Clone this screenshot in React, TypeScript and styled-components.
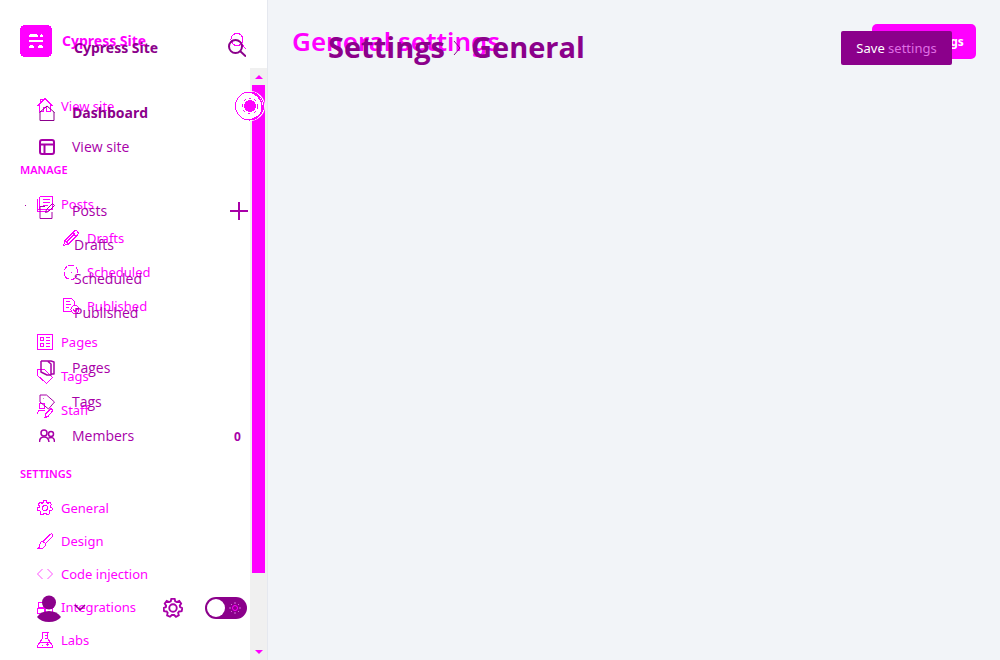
import React from "react";
import styled, { createGlobalStyle, css } from "styled-components";

const bright = "#ff00ff";
const deep = "#8b008b";
const mid = "#a800a8";
const wide = `"Noto Sans", "Open Sans", sans-serif`;

const GlobalStyle = createGlobalStyle`
  * { box-sizing: border-box; }
  body { margin: 0; background: #f2f4f8; font-family: "Open Sans", "Noto Sans", sans-serif; font-size: 14px; }
  button { font: inherit; cursor: pointer; }
  a { color: inherit; text-decoration: none; }
  ul { list-style: none; margin: 0; padding: 0; }
`;

const Shell = styled.div`
  display: grid;
  grid-template-columns: 268px minmax(0, 1fr);
  height: 100vh;
  overflow: hidden;
`;

const Stack = styled.div`
  display: grid;
  grid-template: minmax(0, 1fr) / minmax(0, 1fr);
  min-height: 0;
  > * { grid-area: 1 / 1; min-width: 0; }
`;

const Sidebar = styled(Stack).attrs({ as: "aside" })`
  background: #fff;
  border-right: 1px solid #e5e8ef;
`;

const Layer = styled.div<{ $tone: string }>`
  display: flex;
  flex-direction: column;
  color: ${(p) => p.$tone};
  overflow: hidden;
`;

const BackLayer = styled(Layer)`
  font-family: ${wide};
`;

const FrontLayer = styled(Layer)`
  z-index: 2;
`;

const SiteHeader = styled.header<{ $front?: boolean }>`
  display: flex;
  align-items: center;
  flex: none;
  gap: 10px;
  height: ${(p) => (p.$front ? 96 : 82)}px;
  padding: 0 21px 0 ${(p) => (p.$front ? 74 : 20)}px;
`;

const SiteName = styled.strong`
  flex: 1;
  font-family: ${wide};
  font-size: 14px;
  font-weight: 700;
  line-height: 20px;
  white-space: nowrap;
`;

const IconButton = styled.button`
  display: flex;
  flex: none;
  padding: 0;
  border: 0;
  background: none;
  color: inherit;
`;

const Group = styled.ul<{ $top?: number; $bottom?: number }>`
  flex: none;
  margin-top: ${(p) => p.$top ?? 0}px;
  margin-bottom: ${(p) => p.$bottom ?? 0}px;
`;

const Item = styled.li<{
  $front?: boolean;
  $nested?: boolean;
  $bold?: boolean;
  $tight?: boolean;
  $marked?: boolean;
  $tone?: string;
}>`
  display: flex;
  align-items: center;
  justify-content: space-between;
  height: ${(p) => (p.$tight ? 33 : 34)}px;
  padding-right: 19px;
  ${(p) =>
    p.$front
      ? css`padding-left: ${p.$nested ? 74 : 39}px;`
      : css`padding-left: ${p.$nested ? 63 : 37}px;`}
  ${(p) =>
    p.$marked &&
    css`background: linear-gradient(${mid}, ${mid}) 25px 11px / 1px 1px no-repeat;`}
  color: ${(p) => p.$tone ?? "inherit"};
  font-weight: ${(p) => (p.$bold ? 700 : 400)};
`;

const ItemLink = styled.a<{ $front?: boolean }>`
  display: flex;
  align-items: center;
  gap: ${(p) => (p.$front ? 17 : 8)}px;
  font-size: ${(p) => (p.$front ? 14 : 13)}px;
  line-height: 20px;
  white-space: nowrap;
`;

const GroupTitle = styled.h2`
  flex: none;
  margin: 30px 0 0;
  padding-left: 20px;
  font-size: 11px;
  font-weight: 600;
  line-height: 34px;
`;

const Count = styled.span`
  width: 14px;
  font-size: 12px;
  font-weight: 700;
`;

const Footer = styled.footer`
  display: flex;
  align-items: center;
  flex: none;
  height: 28px;
  margin-top: auto;
  margin-bottom: 38px;
  padding: 0 20px 0 37px;
`;

const AccountButton = styled(IconButton)`
  align-items: center;
  gap: 13px;
  margin-right: auto;
  padding-top: 2px;
`;

const ToggleLabel = styled.label`
  display: flex;
  align-items: center;
  justify-content: space-between;
  width: 42px;
  height: 22px;
  margin-left: 22px;
  padding: 0 6px 0 2px;
  border-radius: 11px;
  background: ${deep};
`;

const Toggle = styled.input`
  appearance: none;
  width: 18px;
  height: 18px;
  margin: 0;
  border-radius: 50%;
  background: #fff;
`;

const ScrollTrack = styled.div`
  display: flex;
  flex-direction: column;
  align-items: center;
  justify-self: end;
  z-index: 1;
  width: 17px;
  margin-top: 68px;
  background: #f0f0f0;
  color: ${bright};
`;

const ScrollArrow = styled.div`
  display: flex;
  align-items: center;
  justify-content: center;
  height: 17px;
`;

const ScrollRail = styled.div`
  display: flex;
  flex: 1;
  min-height: 0;
`;

const ScrollThumb = styled.div`
  width: 13px;
  height: 87.5%;
  background: ${bright};
`;

const Launcher = styled.button`
  z-index: 3;
  display: flex;
  justify-self: end;
  align-self: start;
  margin: 91px 2px 0 0;
  padding: 0;
  border: 0;
  background: none;
`;

const Main = styled(Stack).attrs({ as: "main" })`
  background: #f2f4f8;
`;

const Toolbar = styled.div<{ $front?: boolean }>`
  display: flex;
  align-items: center;
  justify-content: space-between;
  align-self: start;
  z-index: ${(p) => (p.$front ? 2 : 1)};
  height: ${(p) => (p.$front ? 96 : 83)}px;
  padding: ${(p) => (p.$front ? "0 48px 0 60px" : "0 24px")};
  color: ${(p) => (p.$front ? deep : bright)};
`;

const Title = styled.h1<{ $front?: boolean }>`
  display: flex;
  align-items: center;
  margin: 0;
  padding-bottom: 2px;
  font-family: ${(p) => (p.$front ? "inherit" : wide)};
  font-size: ${(p) => (p.$front ? 29 : 26)}px;
  font-weight: ${(p) => (p.$front ? 700 : 600)};
  line-height: 36px;
  white-space: nowrap;
`;

const SaveButton = styled.button<{ $front?: boolean }>`
  width: ${(p) => (p.$front ? 111 : 104)}px;
  height: ${(p) => (p.$front ? 34 : 35)}px;
  padding: 0;
  border: 0;
  border-radius: ${(p) => (p.$front ? 2 : 5)}px;
  background: ${(p) => (p.$front ? deep : bright)};
  color: #fff;
  font-family: ${wide};
  font-size: ${(p) => (p.$front ? 13 : 12)}px;
  font-weight: ${(p) => (p.$front ? 400 : 700)};
  white-space: nowrap;
`;

const Tint = styled.span`
  color: #df6fe4;
`;

type IconProps = { size?: number; children: React.ReactNode; width?: number; crisp?: boolean };

const Icon = ({ size = 16, children, width = 1, crisp }: IconProps) => (
  <svg
    width={size}
    height={size}
    viewBox={`0 0 ${size} ${size}`}
    fill="none"
    stroke="currentColor"
    strokeWidth={width}
    strokeLinejoin="round"
    shapeRendering={crisp ? "crispEdges" : "auto"}
    aria-hidden="true"
  >
    {children}
  </svg>
);

const gear8 =
  "M6.7.6h2.6l.5 2 1.2.6 2-.8 1.5 2-1.1 1.8.3 1.1 1.8.8-.6 2.5-2 .2-.8 1 .5 2-2.2 1.2-1.5-1.4H7.1L5.6 15l-2.3-1.1.4-2.1-.8-1-2-.2L.4 8.1l1.9-.8.2-1.1-1.1-1.8 1.6-2 2 .8 1.2-.6z";

const icons = {
  home: <Icon crisp><path d="M.5 8 8 .5 15.500 8M2.500 6.500v7h4v-4h3v4h4v-7M3.500 4.500v-3h2" /></Icon>,
  posts: <Icon crisp><path d="M2.500.5h13v13h-3l-2 2h-10v-13M2.500.5v13M5.500 3.500h7M5.500 6.500h7M5.500 9.500h5M.5 13.500h12" /></Icon>,
  pencil: <Icon crisp><path d="m.5 15.500 1.500-5L11 1.500q2-2 3.500 0t0 3.500L5.500 14zM2 10.500 5.500 14M9.500 3l3.500 3.500M4 11.500l8-8" /></Icon>,
  clock: <Icon crisp><path d="M5 1.500h6M13 3.500q2 2 1.500 6M14 12q-2 3.500-6 3.500M6 15q-5-1-5-7M1.500 6 4 2M8 7.500v1" /></Icon>,
  published: <Icon crisp><path d="M7.500 13.500h-7V.5h8l3 3v3M3 3.500h4M3 6.500h5M3 9.500h3" /><circle cx="12" cy="11.500" r="4" /><path d="m10 11.500 2 2 3-3" /></Icon>,
  pages: <Icon crisp><path d="M.5.5h15v15H.5zM3.500 3.500h3v3h-3zM3.500 9.500h3v3h-3zM9 3.500h4M9 6.500h4M9 9.500h4M9 12.500h4" /></Icon>,
  tag: <Icon crisp><path d="M.5 1.500h7l8 8-6 6-9-8zM3.500 4.500h1" /></Icon>,
  staff: <Icon crisp><circle cx="5" cy="4" r="3" /><path d="M.5 12q0-4 4.500-4l3 1M8 15.500l1-4 5-5 2 2-5 6z" /></Icon>,
  gear: <Icon crisp><path d={gear8} /><circle cx="8" cy="8" r="2.500" /></Icon>,
  brush: <Icon crisp><path d="m6 8.500 7-7q2-1.500 2.500 0t-1 3l-6 6zM6 8.500q-3 0-3 3t-2.500 4h4q4-1 4-5" /></Icon>,
  code: <Icon crisp><path d="M5.500 3 .5 8l5 5M10.500 3l5 5-5 5" strokeWidth="0.700" /></Icon>,
  blocks: <Icon crisp><circle cx="4" cy="6" r="3" /><path d="M.5 9.500h7v5h-7zM8.500 9.500h7v5h-7zM10.500 4.500h4v5" /></Icon>,
  flask: <Icon crisp><path d="M4.500.5h7M5.500.5v6l-5 7v2h15v-2l-5-7v-6M3 10.500h10M5.500 12.500v1M9 12.500h3M10.500 11v3M7.500 3.500h3M7.500 6.500h3" /></Icon>,
  house: <Icon><path d="M1 7v8.500h14V7M.5 7.500 8 1l7.500 6.500" /></Icon>,
  layout: <Icon width={2}><rect x="1" y="1" width="14" height="14" rx="2" /><path d="M1 5.500h14M5.500 5.500V15" /></Icon>,
  compose: <Icon><path d="M6 3.500H1v12h12V9M6.500 9.500l1-3 6-6 2 2-6 6z" /></Icon>,
  book: <Icon><path d="M2 1h10l3 1v12h-3M2 1v11l6 3h4V4L9 1.500" strokeWidth="1.500" /></Icon>,
  label: <Icon><path d="M1 1h6.500l8 7-6 7L1 8z" /><path d="M4 4.500h.5" /></Icon>,
  members: <Icon width={1.5}><circle cx="5" cy="5" r="3" /><circle cx="12" cy="6" r="2.500" /><path d="M.5 14q0-5 4.500-5t5 5M9.500 10q6-2 6 4" /></Icon>,
};

type Entry = {
  icon?: keyof typeof icons;
  text: string;
  bold?: boolean;
  tone?: string;
  marked?: boolean;
  extra?: React.ReactNode;
};
type MenuProps = {
  entries: Entry[];
  front?: boolean;
  nested?: boolean;
  tight?: boolean;
  top?: number;
  bottom?: number;
};

const Menu = ({ entries, front, nested, tight, top, bottom }: MenuProps) => (
  <Group $top={top} $bottom={bottom}>
    {entries.map((e) => (
      <Item
        key={e.text}
        $front={front}
        $nested={nested}
        $tight={tight}
        $bold={e.bold}
        $marked={e.marked}
        $tone={e.tone}
      >
        <ItemLink href="#" $front={front}>
          {e.icon && icons[e.icon]}
          {e.text}
        </ItemLink>
        {e.extra}
      </Item>
    ))}
  </Group>
);

const Logo = () => (
  <svg width="32" height="32" viewBox="0 0 32 32" shapeRendering="crispEdges" aria-hidden="true">
    <rect width="32" height="32" rx="5" fill={bright} />
    <path d="M10 9h7v1h-7zM9 10h9v2H9zM20 10h3v2h-3zM21 9h1v1h-1zM9 15h14v2H9zM10 20h3v1h-3zM9 21h5v2H9zM18 21h5v2h-5zM19 20h3v1h-3z" fill="#fff" />
  </svg>
);

const Triangle = ({ down }: { down?: boolean }) => (
  <svg width="8" height="4" viewBox="0 0 8 4" fill="currentColor" aria-hidden="true">
    <path d={down ? "M0 0h8L4 4z" : "M0 4h8L4 0z"} />
  </svg>
);

const AddPost = () => (
  <IconButton aria-label="New post">
    <Icon size={18} width={2}><path d="M9 0v18M0 9h18" /></Icon>
  </IconButton>
);

export default function App() {
  return (
    <>
      <GlobalStyle />
      <Shell>
        <Sidebar>
          <BackLayer $tone={bright}>
            <SiteHeader>
              <Logo />
              <SiteName>Cypress Site</SiteName>
              <IconButton aria-label="Search">
                <Icon crisp><circle cx="7" cy="6.500" r="6" /><path d="m11.500 11 4.500 5" /></Icon>
              </IconButton>
            </SiteHeader>
            <Menu top={7} entries={[{ icon: "home", text: "View site" }]} />
            <GroupTitle>MANAGE</GroupTitle>
            <Menu entries={[{ icon: "posts", text: "Posts" }]} />
            <Menu
              nested
              bottom={2}
              entries={[
                { icon: "pencil", text: "Drafts" },
                { icon: "clock", text: "Scheduled" },
                { icon: "published", text: "Published" },
              ]}
            />
            <Menu
              entries={[
                { icon: "pages", text: "Pages" },
                { icon: "tag", text: "Tags" },
                { icon: "staff", text: "Staff" },
              ]}
            />
            <GroupTitle>SETTINGS</GroupTitle>
            <Menu
              tight
              entries={[
                { icon: "gear", text: "General" },
                { icon: "brush", text: "Design" },
                { icon: "code", text: "Code injection" },
                { icon: "blocks", text: "Integrations" },
                { icon: "flask", text: "Labs" },
              ]}
            />
          </BackLayer>

          <ScrollTrack>
            <ScrollArrow><Triangle /></ScrollArrow>
            <ScrollRail><ScrollThumb /></ScrollRail>
            <ScrollArrow><Triangle down /></ScrollArrow>
          </ScrollTrack>

          <FrontLayer $tone={deep}>
            <SiteHeader $front>
              <SiteName>Cypress Site</SiteName>
              <IconButton aria-label="Search site">
                <Icon size={18} width={2}><circle cx="7.500" cy="7.500" r="6.500" /><path d="m12 12 6 5.500" /></Icon>
              </IconButton>
            </SiteHeader>
            <Menu
              front
              entries={[
                { icon: "house", text: "Dashboard", bold: true },
                { icon: "layout", text: "View site", tone: mid },
              ]}
            />
            <Menu
              front
              top={30}
              entries={[{ icon: "compose", text: "Posts", tone: mid, marked: true, extra: <AddPost /> }]}
            />
            <Menu
              front
              nested
              bottom={21}
              entries={[
                { text: "Drafts", tone: mid },
                { text: "Scheduled", tone: mid },
                { text: "Published", tone: mid },
              ]}
            />
            <Menu
              front
              entries={[
                { icon: "book", text: "Pages", tone: mid },
                { icon: "label", text: "Tags", tone: mid },
                { icon: "members", text: "Members", tone: mid, extra: <Count>0</Count> },
              ]}
            />
            <Footer>
              <AccountButton aria-label="Account">
                <svg width="24" height="28" viewBox="0 0 24 28" fill="currentColor" aria-hidden="true">
                  <circle cx="12" cy="7.500" r="7" />
                  <path d="M0 22q4-6 12-6t12 6q-4 5-12 5T0 22z" />
                </svg>
                <Icon size={12} width={1.5}><path d="m1 2 5 5 5-5" /></Icon>
              </AccountButton>
              <IconButton aria-label="Settings">
                <svg width="20" height="20" viewBox="0 0 16 16" fill="none" stroke={mid} strokeWidth="1.500" aria-hidden="true">
                  <path d={gear8} />
                  <circle cx="8" cy="8" r="3" />
                </svg>
              </IconButton>
              <ToggleLabel>
                <Toggle type="checkbox" aria-label="Dark mode" />
                <svg width="12" height="12" viewBox="0 0 12 12" fill="none" stroke="#d070d8" aria-hidden="true">
                  <circle cx="6" cy="6" r="2.500" stroke={bright} />
                  <path d="M6 0v2M6 10v2M0 6h2M10 6h2M2 2l1 1M9 9l1 1M2 10l1-1M9 3l1-1" />
                </svg>
              </ToggleLabel>
            </Footer>
          </FrontLayer>

          <Launcher aria-label="Open site">
            <svg width="30" height="30" viewBox="0 0 30 30" fill="none" aria-hidden="true">
              <circle cx="15" cy="15" r="15" fill="#fff" />
              <g stroke={bright} shapeRendering="crispEdges">
                <circle cx="14.500" cy="15" r="14" />
                <path d="M17 2q9 3 10 13T17 28" strokeWidth="1.500" />
                <circle cx="15" cy="15" r="8" strokeDasharray="3 3" />
              </g>
              <circle cx="15" cy="15" r="6" fill={bright} shapeRendering="crispEdges" />
            </svg>
          </Launcher>
        </Sidebar>

        <Main>
          <Toolbar>
            <Title>General settings</Title>
            <SaveButton>Save settings</SaveButton>
          </Toolbar>
          <Toolbar $front>
            <Title $front>
              Settings
              <svg width="26" height="16" viewBox="0 0 26 16" fill="none" stroke="currentColor" aria-hidden="true">
                <path d="m9 2 6 7-6 7" />
              </svg>
              General
            </Title>
            <SaveButton $front>
              Save <Tint>settings</Tint>
            </SaveButton>
          </Toolbar>
        </Main>
      </Shell>
    </>
  );
}
